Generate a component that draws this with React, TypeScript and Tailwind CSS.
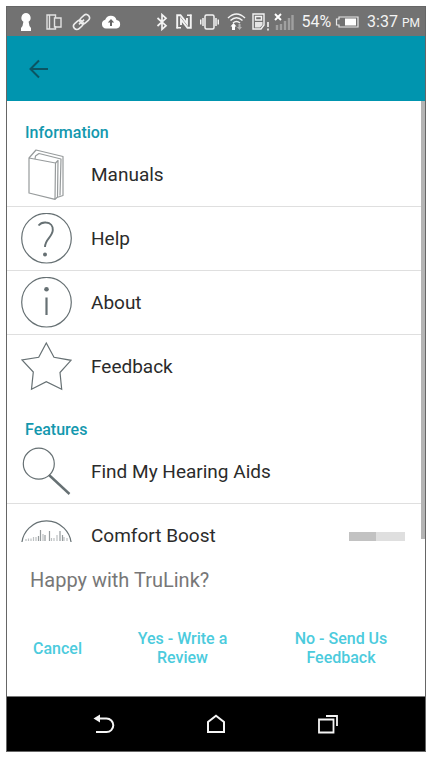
import type { ReactNode } from "react";

const INK = "#667073";

function LineIcon({ children }: { children: ReactNode }) {
  return (
    <svg width="51" height="51" viewBox="0 0 51 51" fill="none" stroke={INK} strokeWidth="1.2" className="shrink-0" aria-hidden="true">
      {children}
    </svg>
  );
}

function BookIcon() {
  return (
    <LineIcon>
      <g stroke="#979b9c" strokeLinejoin="round">
        <path d="M8 9 L34.5 14 L34 50.3 L8 44 Z" />
        <path d="M8 9 L15 1 L42 7.5 L42 46.5 L36 48.5 L34 50.3" />
        <path d="M14 10 L14.5 7 L18 4.5 L40 10 L39 46.5" />
        <path d="M34.5 14 L37 11.5 L36.5 48" />
      </g>
    </LineIcon>
  );
}

function HelpIcon() {
  return (
    <LineIcon>
      <circle cx="25.5" cy="25.2" r="24.8" />
      <path d="M17.5 12.5 C20 9.5 23 9.3 25 9.5 C29.5 9.8 32 13 31.8 17 C31.5 24 24 26 24 34" strokeWidth="1.9" />
      <circle cx="24" cy="41.5" r="2" fill={INK} stroke="none" />
    </LineIcon>
  );
}

function AboutIcon() {
  return (
    <LineIcon>
      <circle cx="25.5" cy="25.2" r="24.8" />
      <path d="M25.5 20.5 V38" strokeWidth="2.2" />
      <circle cx="25.5" cy="12.2" r="2.3" fill={INK} stroke="none" />
    </LineIcon>
  );
}

function StarIcon() {
  return (
    <LineIcon>
      <path d="M25.3 2 L33 16.3 L50 19.3 L39 31.5 L40.7 48.3 L25.3 40.7 L10.5 48.3 L12.3 31 L1 19 L17.7 16.3 Z" />
    </LineIcon>
  );
}

function FindIcon() {
  return (
    <LineIcon>
      <circle cx="17.8" cy="17.7" r="15.5" />
      <path d="M28 29 L48.5 48" strokeWidth="2.4" />
    </LineIcon>
  );
}

function BoostIcon() {
  return (
    <LineIcon>
      <circle cx="25.5" cy="25.7" r="24.8" />
      <path d="M5 21 V19 M7.5 21 V18.5 M10 21 V18.5 M12.5 21 V17 M15 21 V17 M22 21 V14 M30.5 21 V18 M33 21 V18 M36 21 V15 M43 21 V17 M46 21 V18" stroke="#bcc0c2" />
      <path d="M17.5 21 V16 M19.5 21 V10 M24 21 V15 M28.5 21 V11 M39 21 V11 M41.5 21 V15" stroke="#959b9d" />
    </LineIcon>
  );
}

function StatusBar() {
  return (
    <div className="flex h-[29px] shrink-0 items-center bg-[#727272] pr-[5px] pl-[13px] text-[#f4f4f4]">
      <div className="flex items-center gap-[10px]">
        <svg width="12" height="20" viewBox="0 0 12 20" fill="#fff">
          <path d="M6 1 a4.8 4.8 0 0 1 2.6 8.7 L9.5 14 L11 16 V19 H1 V16 L2.5 14 L3.4 9.7 A4.8 4.8 0 0 1 6 1 Z" />
        </svg>
        <svg width="20" height="16" viewBox="0 0 20 16" fill="none" stroke="#e2e2e2" strokeWidth="1.4">
          <path d="M13.5 4 V1 H5 V15 H13.5 V12 M7.5 1 V15" />
          <path d="M12.5 4 H19 V13 H12.5 Z" />
        </svg>
        <svg width="19" height="18" viewBox="0 0 19 18" fill="none" stroke="#ececec" strokeWidth="1.6">
          <g transform="rotate(-42 9.5 9)">
            <rect x="0" y="5.7" width="10.5" height="6.6" rx="3.3" />
            <rect x="8.5" y="5.7" width="10.5" height="6.6" rx="3.3" />
            <path d="M6 9 H13" />
          </g>
        </svg>
        <svg width="20" height="14" viewBox="0 0 20 14">
          <path d="M5 13.5 a4.5 4.5 0 0 1 -.8 -8.8 A6 6 0 0 1 15.5 5 A4.3 4.3 0 0 1 15.5 13.5 Z" fill="#fff" />
          <path d="M10 4 L13.2 7.5 H11 V11 H9 V7.5 H6.8 Z" fill="#666" />
        </svg>
      </div>
      <div className="ml-auto flex items-center">
        <div className="flex items-center gap-2">
          <svg width="12" height="18" viewBox="0 0 12 18" fill="none" stroke="#f4f4f4" strokeWidth="1.7">
            <path d="M1.5 5 L10 12.7 L6 16.3 V1.7 L10 5.3 L1.5 13" />
          </svg>
          <svg width="16" height="15" viewBox="0 0 16 15" fill="none" stroke="#f4f4f4">
            <path d="M1.2 14.5 V1.2 H4.5 L11 9.5 V4" strokeWidth="1.9" />
            <path d="M14.8 0.5 V13.8 H11.5 L5 5.5 V11" strokeWidth="1.9" />
            <path d="M0.5 13.8 H5 M11 1.2 H15.5" strokeWidth="1.4" />
          </svg>
          <svg width="19" height="16" viewBox="0 0 19 16" fill="none" stroke="#f4f4f4" strokeWidth="1.5">
            <rect x="5" y="1" width="9" height="14" rx="1.5" />
            <path d="M3 4 V12 M.7 5.5 V10.5 M16 4 V12 M18.3 5.5 V10.5" />
          </svg>
          <svg width="19" height="19" viewBox="0 0 19 19" fill="none" stroke="#f4f4f4" strokeWidth="1.5">
            <path d="M1 6 Q9.5 -2 18 6 M3.5 8.5 Q9.5 3 15.5 8.5 M6 11 Q9.5 8 13 11" />
            <path d="M6.5 11 L9.5 14.5 H8 V18 H5 V14.5 H3.5 Z" fill="#fff" stroke="none" />
            <path d="M12.5 18 L15 15 H13.5 V12 H11.5 V15 H10 Z" fill="#b5b5b5" stroke="none" />
          </svg>
        </div>
        <div className="ml-[6px] flex items-center gap-1">
          <svg width="18" height="18" viewBox="0 0 18 18" fill="none" stroke="#f4f4f4" strokeWidth="1.4">
            <path d="M1 1 H12 V12 L9 16 H1 Z M3.5 3.5 H9.5 V7 H3.5 Z" />
            <path d="M3 9 H10.5 V12 L8 14.5 H3 Z" fill="#e5e5e5" stroke="none" />
            <path d="M16 9 V14 M16 15.5 V17.5" strokeWidth="1.6" />
          </svg>
          <svg width="20" height="18" viewBox="0 0 20 18">
            <path d="M3 17 V12 M7 17 V11 M11 17 V8 M15 17 V5 M18.5 17 V2" stroke="#a0a0a0" strokeWidth="2.4" />
            <path d="M1 1 L7 7 M7 1 L1 7" stroke="#fff" strokeWidth="1.9" />
          </svg>
        </div>
        <span className="ml-[7px] text-base leading-5">54%</span>
        <svg width="24" height="12" viewBox="0 0 24 12" className="ml-1" fill="none" stroke="#e8e8e8" strokeWidth="1.2">
          <path d="M4 1 H23 V11 H4 V9 H1.5 V3 H4 Z" />
          <rect x="10" y="2.5" width="11" height="7" fill="#fff" stroke="none" />
        </svg>
        <span className="ml-2 text-base leading-5">3:37</span>
        <span className="ml-1 pt-[3px] text-xs leading-4">PM</span>
      </div>
    </div>
  );
}

function SectionTitle({ children }: { children: ReactNode }) {
  return <h2 className="px-[18px] pt-[21px] text-base leading-[21px] font-medium text-[#1398ae]">{children}</h2>;
}

function Row({ icon, label, last = false }: { icon: ReactNode; label: string; last?: boolean }) {
  return (
    <button
      type="button"
      className={`flex w-full items-center gap-[19px] px-[14px] py-[6px] text-left text-[19px] leading-6 text-[#2b2b2b] ${last ? "" : "border-b border-[#dfdfdf]"}`}
    >
      {icon}
      {label}
    </button>
  );
}

export default function App() {
  return (
    <div className="h-screen bg-white py-[6px] pr-[5px] pl-[6px] font-['Roboto','Liberation_Sans',sans-serif]">
      <div className="flex h-full flex-col border border-[#666]">
        <StatusBar />

        <header className="flex h-[65px] shrink-0 items-center bg-[#0095af] px-[22px]">
          <button type="button" aria-label="Back">
            <svg width="20" height="20" viewBox="0 0 20 20" fill="none" stroke="#0b5563" strokeWidth="2">
              <path d="M19 10 H2 M10 1.5 L1.5 10 L10 18.5" />
            </svg>
          </button>
        </header>

        <main className="relative min-h-0 flex-1 overflow-hidden">
          <SectionTitle>Information</SectionTitle>
          <Row icon={<BookIcon />} label="Manuals" />
          <Row icon={<HelpIcon />} label="Help" />
          <Row icon={<AboutIcon />} label="About" />
          <Row icon={<StarIcon />} label="Feedback" last />
          <SectionTitle>Features</SectionTitle>
          <Row icon={<FindIcon />} label="Find My Hearing Aids" />
          <label className="flex items-start gap-[19px] pt-4 pr-5 pl-[14px] text-[19px] leading-8 text-[#2b2b2b]">
            <BoostIcon />
            <span className="flex-1">Comfort Boost</span>
            <input
              type="checkbox"
              className="mt-3 h-[9px] w-14 appearance-none border-l-[27px] border-[#c2c2c2] bg-[#dfdfdf]"
            />
          </label>
          <div className="absolute top-0 right-0 h-[438px] max-h-full w-1 bg-[#b4b4b4]" />
        </main>

        <section className="shrink-0 border-b border-[#777] bg-white pb-[29px]">
          <p className="px-[23px] pt-[26px] text-xl leading-6 text-[#777]">Happy with TruLink?</p>
          <div className="flex items-center justify-between px-[26px] pt-[37px] text-base leading-[19px] font-medium text-[#4ccbdd]">
            <button type="button">Cancel</button>
            <button type="button" className="w-[100px]">Yes - Write a Review</button>
            <button type="button" className="w-[116px] px-1">No - Send Us Feedback</button>
          </div>
        </section>

        <nav className="flex h-[54px] shrink-0 items-center justify-center gap-[90px] bg-black">
          <button type="button" aria-label="Back">
            <svg width="22" height="20" viewBox="0 0 22 20" fill="none" stroke="#f5f5f5" strokeWidth="2">
              <path d="M5 4.5 H13.5 a6.8 6.8 0 0 1 0 13.6 H3" />
              <path d="M0.5 4.5 L7 0.5 V8.5 Z" fill="#f5f5f5" stroke="none" />
            </svg>
          </button>
          <button type="button" aria-label="Home">
            <svg width="22" height="20" viewBox="0 0 22 20" fill="none" stroke="#f5f5f5" strokeWidth="2">
              <path d="M3 18 V8 L11 1.8 L19 8 V18 Z" />
            </svg>
          </button>
          <button type="button" aria-label="Recent apps">
            <svg width="22" height="20" viewBox="0 0 22 20" fill="none" stroke="#f5f5f5" strokeWidth="1.8">
              <path d="M2 5.5 H16.5 V18.5 H2 Z M9 2 H20 V12" />
            </svg>
          </button>
        </nav>
      </div>
    </div>
  );
}
